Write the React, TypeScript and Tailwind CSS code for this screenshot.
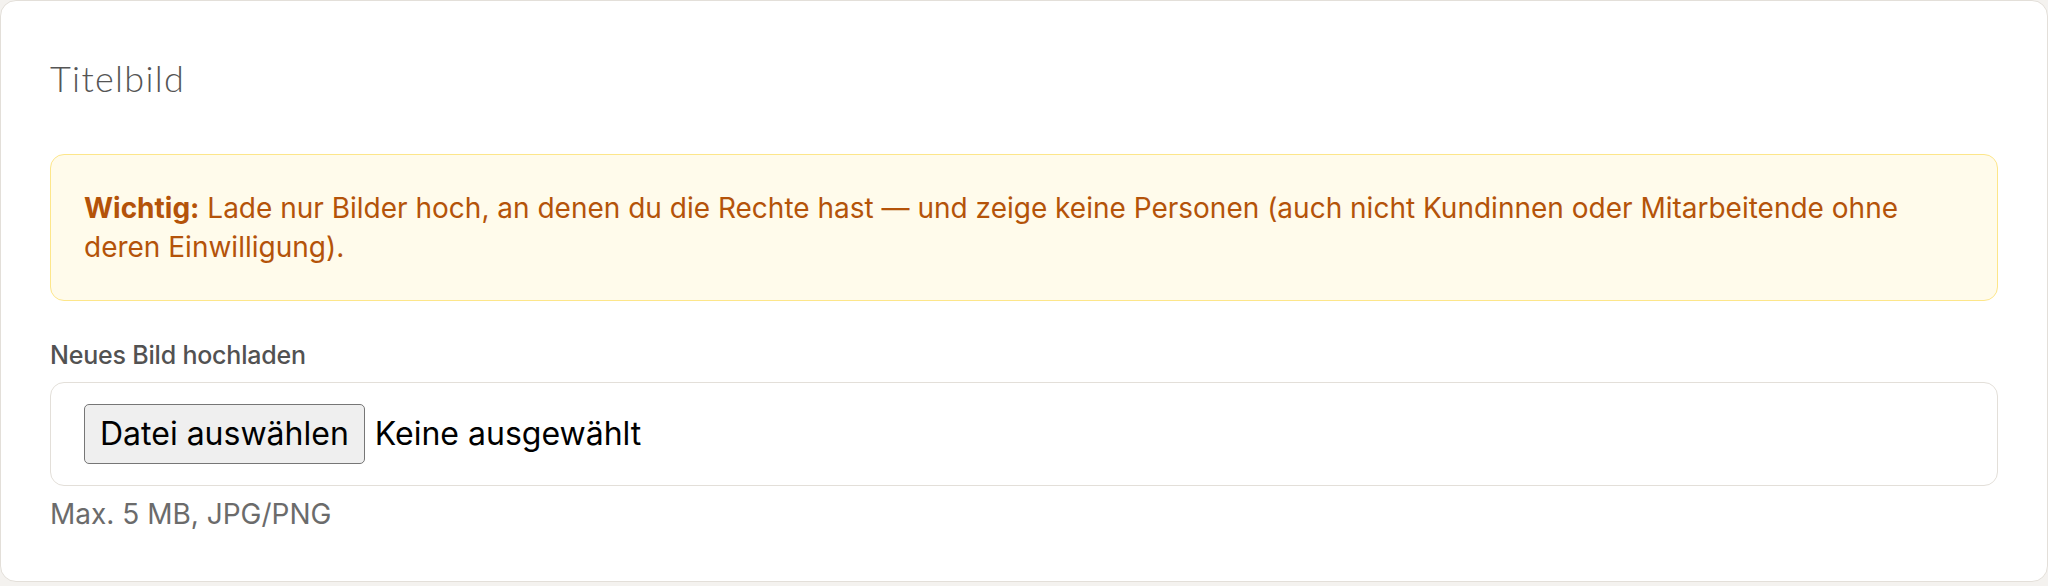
import React from 'react';

const App: React.FC = () => {
  return (
    <div className="min-h-screen bg-[#f4f2ef]" style={{ fontFamily: 'Inter, "Noto Sans", sans-serif' }}>
      <div className="bg-white border border-[#e3dfd9] rounded-[16px] px-[49px] pt-[49px] pb-[49px]">
        <h2
          className="text-[36px] leading-[56px] font-light tracking-[1.3px] text-[#555555]"
          style={{ fontFamily: 'Lato, Roboto, sans-serif' }}
        >
          Titelbild
        </h2>

        <div className="mt-[48px] bg-[#fffbeb] border border-[#fde68a] rounded-[14px] px-[33px] pt-[34px] pb-[33px] text-[28px] leading-[39px] text-[#b45309]">
          <strong className="font-bold">Wichtig:</strong> Lade nur Bilder hoch, an denen du die Rechte hast — und
          zeige keine Personen (auch nicht Kundinnen oder Mitarbeitende ohne deren Einwilligung).
        </div>

        <label className="block mt-[36px] text-[25px] leading-[36px] tracking-[-0.2px] font-medium text-[#525252]">
          Neues Bild hochladen
        </label>

        <div className="mt-[9px] border border-[#e3dfd9] rounded-[14px] px-[33px] py-[21px] flex items-center">
          <span className="h-[60px] flex items-center px-[15px] bg-[#efefef] border border-[#767676] rounded-[5px] text-[32px] text-black">
            Datei auswählen
          </span>
          <span className="ml-[10px] text-[32px] text-black">Keine ausgewählt</span>
        </div>

        <p className="mt-[10px] text-[28px] leading-[36px] text-[#6b6b6b]">Max. 5 MB, JPG/PNG</p>
      </div>
    </div>
  );
};

export default App;
